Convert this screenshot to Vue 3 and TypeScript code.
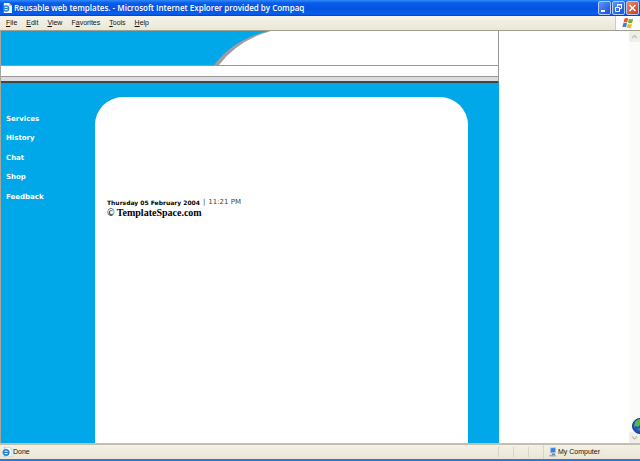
<script setup lang="ts">
interface MenuEntry {
  key: string
  before: string
  after: string
}

const menu: MenuEntry[] = [
  { before: '', key: 'F', after: 'ile' },
  { before: '', key: 'E', after: 'dit' },
  { before: '', key: 'V', after: 'iew' },
  { before: 'F', key: 'a', after: 'vorites' },
  { before: '', key: 'T', after: 'ools' },
  { before: '', key: 'H', after: 'elp' },
]

const links: string[] = ['Services', 'History', 'Chat', 'Shop', 'Feedback']
</script>

<template>
  <div class="window">
    <header class="titlebar">
      <svg class="page-icon" viewBox="0 0 11 11" aria-hidden="true">
        <path d="M2 0h6l3 3v8H2z" fill="#f4f7fb" />
        <path d="M8 0v3h3z" fill="#9db4d2" />
        <circle cx="4.5" cy="6" r="2.8" fill="#d8ecfb" stroke="#2a7fd4" stroke-width="1.5" />
        <path d="M2 6h5" stroke="#2a7fd4" stroke-width="1.2" />
      </svg>
      <h1 class="title">Reusable web templates. - Microsoft Internet Explorer provided by Compaq</h1>
      <div class="controls">
        <button class="control" type="button" aria-label="Minimize">
          <svg viewBox="0 0 11 12"><path d="M2 9h4" stroke="#fff" stroke-width="2" /></svg>
        </button>
        <button class="control" type="button" aria-label="Restore">
          <svg viewBox="0 0 11 12" fill="none" stroke="#fff">
            <path d="M4.500 4.500v-2h4v4H7" />
            <path d="M4 2.800h5" stroke-width="1.400" />
            <path d="M2.500 5.500h4v4h-4z" />
          </svg>
        </button>
        <button class="control close" type="button" aria-label="Close">
          <svg viewBox="0 0 11 12"><path d="M2.500 3l6 6M8.500 3l-6 6" stroke="#fff" stroke-width="1.600" /></svg>
        </button>
      </div>
    </header>

    <nav class="menubar" aria-label="Browser menu">
      <button v-for="m in menu" :key="m.key" class="menu-item" type="button">{{ m.before }}<u>{{ m.key }}</u>{{ m.after }}</button>
      <span class="throbber">
        <svg viewBox="0 0 12 12" aria-hidden="true">
          <path d="M2.500 1.500q2-1.200 3.600 0L5.200 5.500q-1.800-1-3.700 0z" fill="#e8552b" />
          <path d="M6.800 1.800q2 1 4.400 0l-1 4q-2 .9-4.300 0z" fill="#6fae3c" />
          <path d="M1.300 6.300q2-1 3.700 0l-1 4q-1.800-1-3.700 0z" fill="#3f78d8" />
          <path d="M5.700 6.700q2 1 4.300 0l-1 4q-2.200.8-4.300-.2z" fill="#f4b62a" />
        </svg>
      </span>
    </nav>

    <div class="viewport">
      <div class="site">
        <div class="banner">
          <svg class="curve" viewBox="0 0 60 34" aria-hidden="true">
            <path d="M0 34Q20 8 54 0H60V34z" fill="#9d9da3" />
            <path d="M5 34Q24 9 57 0H60V34z" fill="#fff" />
          </svg>
        </div>
        <div class="strip"></div>
        <div class="rule"></div>
        <div class="body">
          <nav class="links" aria-label="Site">
            <a v-for="l in links" :key="l" href="#">{{ l }}</a>
          </nav>
          <main class="panel">
            <p class="date"><b>Thursday 05 February 2004</b><span>|</span><span>11:21 PM</span></p>
            <p class="copy">© TemplateSpace.com</p>
          </main>
        </div>
      </div>
      <div class="blank">
        <svg class="globe" viewBox="0 0 8 16" aria-hidden="true">
          <circle cx="8" cy="8" r="7.500" fill="#1b55c4" stroke="#123a86" />
          <path d="M3 4q2-3 5-3v6L6 9 4 8 2 9z" fill="#55b948" />
          <path d="M5 11l3-1v3z" fill="#3c9c46" />
        </svg>
      </div>
      <div class="scrollbar">
        <button type="button" aria-label="Scroll up">
          <svg viewBox="0 0 11 11"><path d="M3 7l2.500-2.500L8 7" fill="none" stroke="#c4c3b8" stroke-width="1.500" /></svg>
        </button>
        <button type="button" aria-label="Scroll down">
          <svg viewBox="0 0 11 11"><path d="M3 4.500L5.500 7 8 4.500" fill="none" stroke="#c4c3b8" stroke-width="1.500" /></svg>
        </button>
      </div>
    </div>

    <footer class="status">
      <svg class="page-icon" viewBox="0 0 11 11" aria-hidden="true">
        <path d="M3 0h5l3 3v8H3z" fill="#fafcff" stroke="#7f9cc4" stroke-width=".6" />
        <circle cx="4.500" cy="6" r="3" fill="#c9e6fa" stroke="#2384d4" stroke-width="1.800" />
        <path d="M2 6h5" stroke="#2384d4" stroke-width="1.200" />
      </svg>
      <span class="message">Done</span>
      <span class="cell"></span>
      <span class="cell"></span>
      <span class="cell"></span>
      <span class="zone">
        <svg class="computer" viewBox="0 0 9 10" aria-hidden="true">
          <path d="M2 .5L8 0v6L2 6.500z" fill="#b9c8dc" />
          <path d="M2.800 1.200L7.200 1v4l-4.400.5z" fill="#2e86e6" />
          <path d="M4 6.500h3V8H4z" fill="#5e7898" />
          <path d="M1 8l6-.6L8.500 9.500H2z" fill="#93aac6" />
        </svg>
        My Computer
      </span>
    </footer>
  </div>
</template>

<style>
body {
  margin: 0;
}
</style>

<style scoped>
.window {
  display: flex;
  flex-direction: column;
  box-sizing: border-box;
  min-height: 100vh;
  border-bottom: 2px solid #2a78e6;
  background: #fff;
  color: #111;
  font-family: "Liberation Sans", sans-serif;
  font-size: 7px;
}

button {
  margin: 0;
  padding: 0;
  border: 0;
  background: none;
  color: inherit;
  font: inherit;
}

svg {
  display: block;
}

.titlebar {
  display: flex;
  align-items: center;
  height: 16px;
  padding: 0 1px 0 2px;
  gap: 2px;
  background: linear-gradient(#2f8bfa 0, #0a5bea 3px, #0553e0 9px, #0560f5 14px, #0341b8 16px);
}

.page-icon {
  width: 10px;
  height: 10px;
  flex: none;
}

.title {
  flex: 1;
  margin: 0;
  color: #fff;
  font-family: "Open Sans", sans-serif;
  font-size: 8px;
  font-weight: 600;
  line-height: 16px;
  white-space: nowrap;
}

.controls {
  display: flex;
  gap: 1px;
}

.control {
  box-sizing: border-box;
  width: 13px;
  height: 14px;
  border: 1px solid #b4cdf8;
  border-radius: 2px;
  background: linear-gradient(135deg, #5f94f4, #1b4fd6);
}

.close {
  background: linear-gradient(135deg, #ee8a68, #cf3a12);
}

.menubar {
  display: flex;
  align-items: center;
  height: 14px;
  padding-left: 6px;
  gap: 9px;
  border-bottom: 1px solid #a19f91;
  background: linear-gradient(#f5f4ec, #eae7d6);
}

.menu-item {
  line-height: 14px;
}

.throbber {
  display: flex;
  align-items: center;
  justify-content: center;
  align-self: stretch;
  width: 24px;
  margin-left: auto;
  border-left: 1px solid #cfccbc;
  background: #fff;
}

.throbber svg {
  width: 12px;
  height: 12px;
}

.viewport {
  display: flex;
  flex: 1;
  border-left: 1px solid #a5a69c;
}

.site {
  display: flex;
  flex-direction: column;
  width: 78%;
}

.banner {
  display: flex;
  height: 34px;
  padding-left: 213px;
  border-right: 1px solid #999;
  background: linear-gradient(90deg, #00a7e9 273px, #fff 273px);
}

.curve {
  width: 60px;
  height: 34px;
}

.strip {
  height: 10px;
  border: 1px solid #999;
  border-left: 0;
}

.rule {
  height: 4px;
  border-right: 1px solid #999;
  border-bottom: 2px solid #444;
  background: #dcdce0;
}

.body {
  display: flex;
  flex: 1;
  padding: 14px 31px 0 0;
  background: #00a7e9;
}

.links {
  display: grid;
  grid-template-rows: repeat(5, 1fr);
  flex: none;
  box-sizing: border-box;
  width: 94px;
  height: 114px;
  padding: 17px 0 0 5px;
  font-family: "DejaVu Sans", sans-serif;
  font-size: 7px;
  font-weight: 700;
}

.links a {
  color: #fff;
  line-height: 11px;
  text-decoration: none;
}

.panel {
  flex: 1;
  padding: 101px 12px 0;
  border-radius: 28px 28px 0 0;
  background: #fff;
}

.panel p {
  margin: 0;
}

.date {
  display: flex;
  gap: 3px;
  color: #444;
  font-family: "DejaVu Sans", sans-serif;
  font-size: 7px;
  line-height: 9px;
}

.date b {
  color: #000;
  font-size: 6px;
}

.copy {
  color: #000;
  font-family: "Liberation Serif", serif;
  font-size: 10px;
  font-weight: 700;
  line-height: 11px;
}

.blank {
  display: flex;
  flex: 1;
  position: relative;
}

.globe {
  position: absolute;
  right: -11px;
  bottom: 9px;
  z-index: 1;
  width: 8px;
  height: 16px;
}

.scrollbar {
  display: flex;
  flex-direction: column;
  justify-content: space-between;
  width: 11px;
  background: #fbfbf9;
}

.scrollbar button {
  width: 11px;
  height: 11px;
  border-radius: 2px;
  background: #efeee8;
}

.status {
  display: flex;
  align-items: center;
  height: 14px;
  padding-left: 2px;
  border-top: 2px solid #c2bfae;
  background: linear-gradient(#f3f1e5, #e9e6d4);
  line-height: 14px;
}

.message {
  flex: 1;
  padding-left: 1px;
}

.cell {
  width: 14px;
  height: 10px;
  border-left: 1px solid #d8d5c5;
}

.zone {
  display: flex;
  align-items: center;
  box-sizing: border-box;
  width: 97px;
  gap: 1px;
  padding-left: 4px;
  border-left: 1px solid #d8d5c5;
}

.computer {
  width: 9px;
  height: 10px;
}
</style>
